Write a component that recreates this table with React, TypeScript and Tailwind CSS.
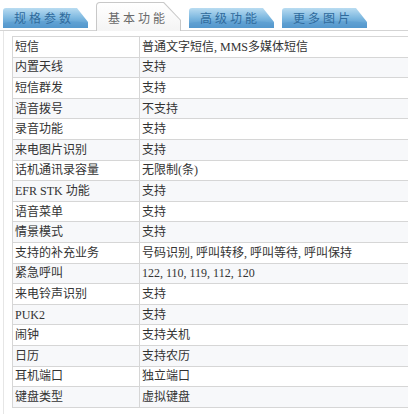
const rows: [string, string][] = [
  ["短信", "普通文字短信, MMS多媒体短信"],
  ["内置天线", "支持"],
  ["短信群发", "支持"],
  ["语音拨号", "不支持"],
  ["录音功能", "支持"],
  ["来电图片识别", "支持"],
  ["话机通讯录容量", "无限制(条)"],
  ["EFR STK 功能", "支持"],
  ["语音菜单", "支持"],
  ["情景模式", "支持"],
  ["支持的补充业务", "号码识别, 呼叫转移, 呼叫等待, 呼叫保持"],
  ["紧急呼叫", "122, 110, 119, 112, 120"],
  ["来电铃声识别", "支持"],
  ["PUK2", "支持"],
  ["闹钟", "支持关机"],
  ["日历", "支持农历"],
  ["耳机端口", "独立端口"],
  ["键盘类型", "虚拟键盘"],
];

const tabs = ["规格参数", "基本功能", "高级功能", "更多图片"];

export default function App() {
  const active = 1;

  return (
    <div className="w-[408px] h-[414px] bg-white overflow-hidden font-['Liberation_Serif','Noto_Sans_CJK_SC',serif] text-[#333]">
      {/* tab strip */}
      <div className="flex items-end h-[31px] pl-[3px] gap-[8px] border-b border-[#d4d4d4]">
        {tabs.map((t, i) =>
          i === active ? (
            <div
              key={t}
              className="relative w-[85px] h-[29px] -mb-px [clip-path:polygon(0_0,80%_0,100%_62%,100%_100%,0_100%)] bg-[#c8c8c8] rounded-tl-[4px]"
            >
              <div className="absolute inset-[1px] bottom-0 bg-linear-to-b from-white to-[#f4f4f4] rounded-tl-[3px] [clip-path:polygon(0_0,80%_0,100%_62%,100%_100%,0_100%)] flex items-center pl-[11px] pt-[2px] text-[12px] tracking-[3px] text-[#6a6a6a] font-['Noto_Sans_CJK_SC',sans-serif]">
                {t}
              </div>
            </div>
          ) : (
            <div
              key={t}
              className="relative w-[85px] h-[20px] mb-[2px] rounded-tl-[3px] [clip-path:polygon(0_0,87%_0,100%_70%,100%_100%,0_100%)] bg-linear-to-b from-[#b9dcf1] via-[#7db8e0] to-[#4a90c8] flex items-center pl-[11px] text-[12px] tracking-[3px] text-[#2f6a9c] font-['Noto_Sans_CJK_SC',sans-serif]"
            >
              <span className="absolute left-0 right-0 bottom-0 h-[7px] bg-[#5a9dd0] opacity-60 rounded-t-[40%]" />
              <span className="relative">{t}</span>
            </div>
          )
        )}
      </div>

      {/* table */}
      <div className="ml-[3px] pl-[8px] pt-[5px] border-l border-[#e6e6e6] h-full">
        <div className="border-l border-t border-[#d6d6d6]">
          {rows.map(([k, v], i) => (
            <div
              key={k}
              className={`flex h-[20.6px] border-b border-[#d6d6d6] text-[12px] leading-none ${
                i % 2 === 0 ? "bg-white" : "bg-[#f7f8fa]"
              }`}
            >
              <div className="w-[127px] shrink-0 border-r border-[#d6d6d6] flex items-center pl-[2px]">{k}</div>
              <div className="flex-1 flex items-center pl-[2px] whitespace-nowrap">{v}</div>
            </div>
          ))}
        </div>
      </div>
    </div>
  );
}
